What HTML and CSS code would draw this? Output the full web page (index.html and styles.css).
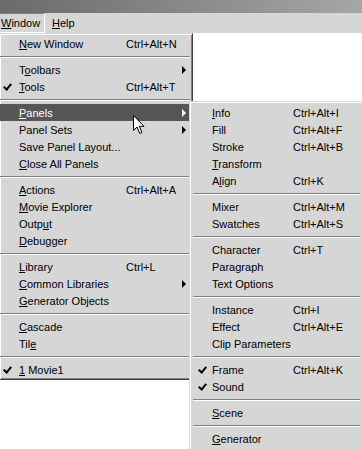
FILE: index.html
```html
<!DOCTYPE html>
<html lang="en">
<head>
  <meta charset="UTF-8">
  <title>Window Menu</title>
  <link rel="stylesheet" href="styles.css">
</head>
<body>
  <div class="titlebar"></div>

  <div class="menubar">
    <span class="mb-item open"><u>W</u>indow</span>
    <span class="mb-item"><u>H</u>elp</span>
  </div>

  <div class="workspace">
    <!-- Window dropdown -->
    <div class="menu main">
      <div class="item"><span class="chk"></span><span><u>N</u>ew Window</span><span>Ctrl+Alt+N</span><span></span></div>
      <div class="sep"></div>
      <div class="item"><span class="chk"></span><span>T<u>o</u>olbars</span><span></span><span class="arrow"></span></div>
      <div class="item"><span class="chk on"></span><span><u>T</u>ools</span><span>Ctrl+Alt+T</span><span></span></div>
      <div class="sep"></div>
      <div class="item active"><span class="chk"></span><span><u>P</u>anels</span><span></span><span class="arrow"></span></div>
      <div class="item"><span class="chk"></span><span>Panel Sets</span><span></span><span class="arrow"></span></div>
      <div class="item"><span class="chk"></span><span>Save Panel Layout...</span><span></span><span></span></div>
      <div class="item"><span class="chk"></span><span><u>C</u>lose All Panels</span><span></span><span></span></div>
      <div class="sep"></div>
      <div class="item"><span class="chk"></span><span><u>A</u>ctions</span><span>Ctrl+Alt+A</span><span></span></div>
      <div class="item"><span class="chk"></span><span><u>M</u>ovie Explorer</span><span></span><span></span></div>
      <div class="item"><span class="chk"></span><span>Outp<u>u</u>t</span><span></span><span></span></div>
      <div class="item"><span class="chk"></span><span><u>D</u>ebugger</span><span></span><span></span></div>
      <div class="sep"></div>
      <div class="item"><span class="chk"></span><span><u>L</u>ibrary</span><span>Ctrl+L</span><span></span></div>
      <div class="item"><span class="chk"></span><span><u>C</u>ommon Libraries</span><span></span><span class="arrow"></span></div>
      <div class="item"><span class="chk"></span><span><u>G</u>enerator Objects</span><span></span><span></span></div>
      <div class="sep"></div>
      <div class="item"><span class="chk"></span><span><u>C</u>ascade</span><span></span><span></span></div>
      <div class="item"><span class="chk"></span><span>Til<u>e</u></span><span></span><span></span></div>
      <div class="sep"></div>
      <div class="item"><span class="chk on"></span><span><u>1</u> Movie1</span><span></span><span></span></div>
    </div>

    <!-- Panels submenu -->
    <div class="menu sub">
      <div class="item"><span class="chk"></span><span><u>I</u>nfo</span><span>Ctrl+Alt+I</span></div>
      <div class="item"><span class="chk"></span><span>Fill</span><span>Ctrl+Alt+F</span></div>
      <div class="item"><span class="chk"></span><span>Stroke</span><span>Ctrl+Alt+B</span></div>
      <div class="item"><span class="chk"></span><span><u>T</u>ransform</span><span></span></div>
      <div class="item"><span class="chk"></span><span>A<u>l</u>ign</span><span>Ctrl+K</span></div>
      <div class="sep"></div>
      <div class="item"><span class="chk"></span><span>Mixer</span><span>Ctrl+Alt+M</span></div>
      <div class="item"><span class="chk"></span><span>Swatches</span><span>Ctrl+Alt+S</span></div>
      <div class="sep"></div>
      <div class="item"><span class="chk"></span><span>Character</span><span>Ctrl+T</span></div>
      <div class="item"><span class="chk"></span><span>Paragraph</span><span></span></div>
      <div class="item"><span class="chk"></span><span>Text Options</span><span></span></div>
      <div class="sep"></div>
      <div class="item"><span class="chk"></span><span>Instance</span><span>Ctrl+I</span></div>
      <div class="item"><span class="chk"></span><span>Effect</span><span>Ctrl+Alt+E</span></div>
      <div class="item"><span class="chk"></span><span>Clip Parameters</span><span></span></div>
      <div class="sep"></div>
      <div class="item"><span class="chk on"></span><span>Frame</span><span>Ctrl+Alt+K</span></div>
      <div class="item"><span class="chk on"></span><span>Sound</span><span></span></div>
      <div class="sep"></div>
      <div class="item"><span class="chk"></span><span><u>S</u>cene</span><span></span></div>
      <div class="sep"></div>
      <div class="item"><span class="chk"></span><span><u>G</u>enerator</span><span></span></div>
    </div>

    <!-- mouse pointer -->
    <svg class="cursor" width="13" height="20" viewBox="0 0 13 20">
      <path d="M0.5 0.5 L0.5 15.5 L4 12 L6.8 18.5 L9 17.5 L6.3 11.3 L11 11.3 Z" fill="#fff" stroke="#000" stroke-width="1" stroke-linejoin="miter"/>
    </svg>
  </div>
</body>
</html>
```

FILE: styles.css
```css
html, body {
  margin: 0;
  padding: 0;
}

body {
  width: 362px;
  height: 449px;
  overflow: hidden;
  background: #fff;
  font-family: "Liberation Sans", Arial, sans-serif;
  font-size: 11px;
  color: #000;
}

u {
  text-decoration: underline;
  text-underline-offset: 1px;
}

.titlebar {
  height: 13px;
  background: linear-gradient(90deg, #6a6a6a, #a6a6a6);
}

.menubar {
  height: 20px;
  background: #d6d6d6;
  display: flex;
  align-items: stretch;
}

.mb-item {
  display: flex;
  align-items: center;
  padding: 0 6px;
}

.mb-item.open {
  width: 43px;
  padding: 0 0 0 1px;
  border-top: 1px solid #808080;
  border-right: 1px solid #fff;
  border-bottom: 1px solid #fff;
  margin-right: 1px;
}

.workspace {
  position: relative;
  height: 416px;
}

/* ---- menus ---- */

.menu {
  background: #d6d6d6;
  border-top: 1px solid #d6d6d6;
  border-right: 1px solid #404040;
  border-bottom: 1px solid #404040;
  box-shadow: inset 1px 1px #fff, inset -1px -1px #808080;
}

.menu.main {
  width: 190px;
  padding: 1px 2px 1px 0;
}

.menu.sub {
  position: absolute;
  left: 189px;
  top: 68px;
  width: 169px;
  height: 360px;
  padding: 2px 2px 0 2px;
  border-left: 1px solid #d6d6d6;
}

.item {
  display: grid;
  height: 17px;
  align-items: center;
  white-space: nowrap;
}

.main .item {
  grid-template-columns: 19px 107px 55px 1fr;
}

.sub .item {
  grid-template-columns: 20px 81px 1fr;
}

.item.active {
  background: #565656;
  color: #fff;
}

.sep {
  height: 9px;
  position: relative;
}

.sep::before {
  content: "";
  position: absolute;
  left: 0;
  right: 0;
  top: 4px;
  border-top: 1px solid #808080;
  border-bottom: 1px solid #fff;
}

.sub .sep::before {
  left: 1px;
  right: 1px;
}

/* check marks */
.chk.on {
  height: 8px;
  background: no-repeat 5px 0 / 7px 7px;
  position: relative;
}

.chk.on::before {
  content: "";
  position: absolute;
  left: 5px;
  top: -1px;
  width: 3px;
  height: 6px;
  border-right: 2px solid #000;
  border-bottom: 2px solid #000;
  transform: rotate(40deg);
}

.sub .chk.on::before {
  left: 8px;
}

/* submenu arrows */
.arrow {
  width: 0;
  height: 0;
  margin-left: 1px;
  border-top: 4px solid transparent;
  border-bottom: 4px solid transparent;
  border-left: 4px solid #000;
}

.item.active .arrow {
  border-left-color: #fff;
}

.cursor {
  position: absolute;
  left: 133px;
  top: 82px;
}
```
